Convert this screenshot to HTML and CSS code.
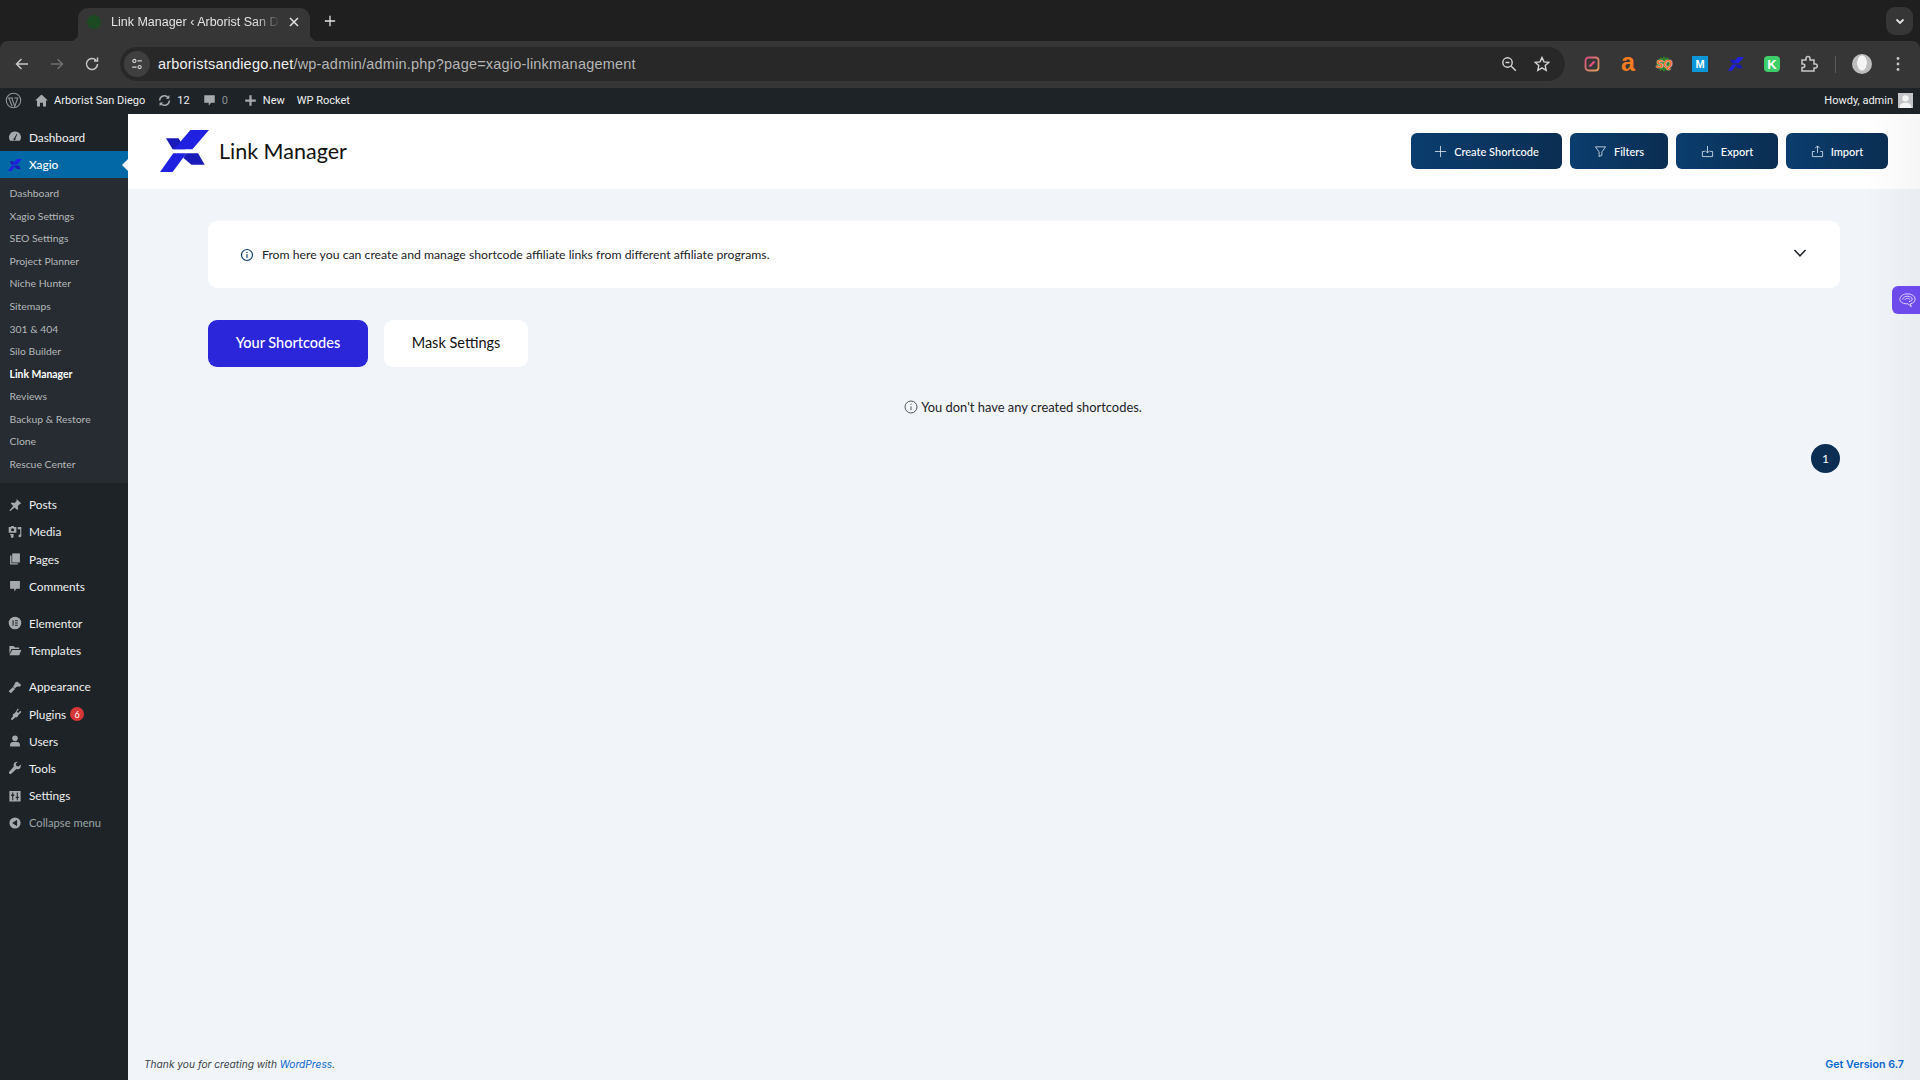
FILE: index.html
```html
<!DOCTYPE html>
<html lang="en">

<head>
    <meta charset="UTF-8">
    <title>Link Manager</title>
    <link rel="stylesheet" href="styles.css">
</head>

<body>

    <section class="chrome">
        <div class="tabstrip">
            <div class="tab">
                <span class="favicon"></span>
                <span class="tab_title">Link Manager ‹ Arborist San D</span>
                <svg class="tab_x" viewBox="0 0 12 12"><path d="M2 2l8 8M10 2l-8 8" /></svg>
            </div>
            <svg class="tab_new" viewBox="0 0 14 14"><path d="M7 1v12M1 7h12" /></svg>
            <div class="tab_menu">
                <svg viewBox="0 0 12 12"><path d="M2.5 4.500L6 8l3.500-3.500" /></svg>
            </div>
        </div>
        <div class="toolbar">
            <svg class="tool_btn" viewBox="0 0 16 16"><path d="M14 8H2.500M7.500 3L2.500 8l5 5" /></svg>
            <svg class="tool_btn dim" viewBox="0 0 16 16"><path d="M2 8h11.500M8.500 3l5 5-5 5" /></svg>
            <svg class="tool_btn" viewBox="0 0 16 16"><path d="M13.500 8a5.500 5.500 0 1 1-1.600-3.900M13.500 1.500v3.500H10" /></svg>
            <div class="omnibox">
                <span class="site_icon">
                    <svg viewBox="0 0 16 16"><circle cx="5" cy="4.500" r="1.800" /><path d="M8.500 4.500h5M2.500 11.500h5" /><circle cx="11" cy="11.500" r="1.800" /></svg>
                </span>
                <span class="url"><b>arboristsandiego.net</b>/wp-admin/admin.php?page=xagio-linkmanagement</span>
                <svg class="omni_icon" viewBox="0 0 16 16"><circle cx="6.500" cy="6.500" r="4.700" /><path d="M10 10l4.800 4.800M4.500 6.500h4" /></svg>
                <svg class="omni_icon" viewBox="0 0 16 16"><path d="M8 1.500l2 4.400 4.700.5-3.500 3.200 1 4.700L8 11.900l-4.200 2.400 1-4.700-3.500-3.200 4.700-.5z" /></svg>
            </div>
            <div class="extensions">
                <span class="ext ext_pen">
                    <svg viewBox="0 0 16 16">
                        <defs>
                            <linearGradient id="pen" x1="0" y1="0" x2="1" y2="1">
                                <stop offset="0" stop-color="#d9507f" />
                                <stop offset="1" stop-color="#d9a25a" />
                            </linearGradient>
                        </defs>
                        <rect x="1.500" y="1.500" width="13" height="13" rx="3" stroke="url(#pen)" />
                        <path d="M5.500 10.500l5-5" stroke="#e0517f" stroke-width="2.400" />
                    </svg>
                </span>
                <span class="ext ext_a">a</span>
                <span class="ext ext_sq">
                    <svg viewBox="0 0 16 16"><path d="M8 0l1.600 2.200L12 1l.6 2.600 2.600.4-.8 2.500L16 8l-1.600 1.500.8 2.500-2.600.4L12 15l-2.400-1.200L8 16l-1.600-2.200L4 15l-.6-2.600-2.600-.4.8-2.500L0 8l1.600-1.500L.8 4l2.600-.4L4 1l2.400 1.200z" /></svg>
                    <b>SQ</b>
                </span>
                <span class="ext ext_m">M</span>
                <span class="ext ext_x"><svg viewBox="0 0 148 127"><use href="#xagio" /></svg></span>
                <span class="ext ext_k">K</span>
                <svg class="ext_puzzle" viewBox="0 0 18 18"><path d="M2 5h4V3.500a2 2 0 0 1 4 0V5h4v4h1.200a2 2 0 0 1 0 4H14v3H2v-3.500h1a1.800 1.800 0 0 0 0-3.600H2z" /></svg>
                <span class="tool_sep"></span>
                <span class="avatar"></span>
                <svg class="kebab" viewBox="0 0 4 16"><circle cx="2" cy="2.500" r="1.400" /><circle cx="2" cy="8" r="1.400" /><circle cx="2" cy="13.500" r="1.400" /></svg>
            </div>
        </div>
    </section>

    <nav class="adminbar">
        <div class="bar_left">
            <svg class="bar_wp" viewBox="0 0 20 20"><circle cx="10" cy="10" r="8.500" /><path d="M4.500 7l4 10M8 7l3.500 10L15 7M3.500 7h6M11 7h4.500" /></svg>
            <span class="bar_item">
                <svg viewBox="0 0 20 20"><path d="M10 2L1.500 10H4v8h4v-5h4v5h4v-8h2.500z" /></svg>
                Arborist San Diego
            </span>
            <span class="bar_item">
                <svg class="stroke" viewBox="0 0 20 20"><path d="M3.500 10a6.500 6.500 0 0 1 11.500-4M16.500 10a6.500 6.500 0 0 1-11.500 4" /><path class="fill" d="M16.500 2.500v5h-5zM3.500 17.500v-5h5z" /></svg>
                12
            </span>
            <span class="bar_item muted">
                <svg viewBox="0 0 20 20"><path d="M3 3h14v10h-5l-3 4v-4H3z" /></svg>
                0
            </span>
            <span class="bar_item">
                <svg viewBox="0 0 20 20"><path d="M8.500 3h3v5.500H17v3h-5.500V17h-3v-5.500H3v-3h5.500z" /></svg>
                New
            </span>
            <span class="bar_item">WP Rocket</span>
        </div>
        <div class="bar_right">
            Howdy, admin
            <span class="bar_user">
                <svg viewBox="0 0 14 14"><circle cx="7" cy="5" r="3" /><path d="M1.500 14c0-4 2.500-5 5.500-5s5.500 1 5.500 5z" /></svg>
            </span>
        </div>
    </nav>

    <div class="wrap">
        <aside class="sidebar">
            <ul class="menu first">
                <li>
                    <svg viewBox="0 0 20 20"><path fill-rule="evenodd" d="M10 2a8.500 8.500 0 0 0-7 13.300h14A8.500 8.500 0 0 0 10 2zm-1 9.500l3.500-6 .8.400-2.700 6.200A1.500 1.500 0 1 1 9 11.500z" /></svg>
                    Dashboard
                </li>
                <li class="current">
                    <svg class="keep" viewBox="0 0 148 127"><use href="#xagio" /></svg>
                    Xagio
                </li>
            </ul>
            <ul class="submenu">
                <li>Dashboard</li>
                <li>Xagio Settings</li>
                <li>SEO Settings</li>
                <li>Project Planner</li>
                <li>Niche Hunter</li>
                <li>Sitemaps</li>
                <li>301 &amp; 404</li>
                <li>Silo Builder</li>
                <li class="valgt">Link Manager</li>
                <li>Reviews</li>
                <li>Backup &amp; Restore</li>
                <li>Clone</li>
                <li>Rescue Center</li>
            </ul>
            <ul class="menu posts">
                <li><svg viewBox="0 0 20 20"><path d="M12 1l7 7-2 .5-3 3 .5 4-1.500 1.500-3.500-3.500L3 19l-1-1 5.500-6.500L4 8l1.500-1.500 4 .5 3-3z" /></svg>Posts</li>
                <li><svg viewBox="0 0 20 20"><path fill-rule="evenodd" d="M1 3h3l1-1.500h3L9 3h3v8H1zm5.500 1.500a2.300 2.300 0 1 0 0 4.600 2.300 2.300 0 0 0 0-4.600z" /><path d="M14 3h5v12.500a2 2 0 1 1-1.500-1.900V6H14zM3 13h5v3.500a2 2 0 1 1-1.500-1.900V14.500H3z" /></svg>Media</li>
                <li><svg viewBox="0 0 20 20"><path d="M6 2h11v13H6z" /><path d="M3 5h2v11h9v2H3z" /></svg>Pages</li>
                <li><svg viewBox="0 0 20 20"><path d="M3 3h14v11h-5l-3 4v-4H3z" /></svg>Comments</li>
            </ul>
            <ul class="menu">
                <li><svg viewBox="0 0 20 20"><path fill-rule="evenodd" d="M10 1a9 9 0 1 0 0 18 9 9 0 0 0 0-18zM6.500 6H8v8H6.500zm3.500 0h4v1.500h-4zm0 3.200h4v1.500h-4zm0 3.300h4V14h-4z" /></svg>Elementor</li>
                <li><svg viewBox="0 0 20 20"><path d="M2 3h6l2 2h6v2H5L2 14z" /><path d="M6 8.500h13L16 16H2z" /></svg>Templates</li>
            </ul>
            <ul class="menu">
                <li><svg viewBox="0 0 20 20"><path d="M13 2l6 5-3 3-1-1-3 1-2 2-3-3 2-2 1-3zM7 10l3 3-6 6-3-3z" /></svg>Appearance</li>
                <li><svg viewBox="0 0 20 20"><path d="M14 2l1.500 1.500-3 3 2 2 3-3L19 7l-4 4.500-1 2-2 1.500-1.500-.5L6 19l-2-2 3.500-4-1-1.500L8 9.500l2-1z" /></svg>Plugins<span class="badge">6</span></li>
                <li><svg viewBox="0 0 20 20"><circle cx="10" cy="6" r="4" /><path d="M3 18v-3c0-3 3-4 7-4s7 1 7 4v3z" /></svg>Users</li>
                <li><svg viewBox="0 0 20 20"><path d="M18 5l-3 3-3-1-1-3 3-3C11 .5 8 2.500 8 6c0 .8.200 1.500.4 2L2 15c-1 1-1 2 0 3s2 1 3 0l7-6.500c4 1.500 7.500-2 6-6.500z" /></svg>Tools</li>
                <li><svg viewBox="0 0 20 20"><path fill-rule="evenodd" d="M2 3h16v15H2zM6 5v3H4.500v2H6v6h1.500v-6H9V8H7.500V5zM12.500 5v6H11v2h1.500v3H14v-3h1.500v-2H14V5z" /></svg>Settings</li>
                <li class="collapse"><svg viewBox="0 0 20 20"><path fill-rule="evenodd" d="M10 2a8 8 0 1 0 0 16 8 8 0 0 0 0-16zm3 3.500v9L6 10z" /></svg>Collapse menu</li>
            </ul>
        </aside>

        <main class="content">
            <header class="plugin_head">
                <div class="brand">
                    <svg class="logo" viewBox="0 0 148 127"><use href="#xagio" /></svg>
                    <h1>Link Manager</h1>
                </div>
                <div class="actions">
                    <button class="action wide"><svg viewBox="0 0 14 14"><path d="M7 1v12M1 7h12" /></svg>Create Shortcode</button>
                    <button class="action filters"><svg viewBox="0 0 14 14"><path d="M1.500 2h11L8.500 7.500V11L5.500 12.500v-5z" /></svg>Filters</button>
                    <button class="action"><svg viewBox="0 0 14 14"><path d="M7 1v7.500M4.500 6L7 8.500 9.500 6M4 7H1.500v5.500h11V7H10" /></svg>Export</button>
                    <button class="action"><svg viewBox="0 0 14 14"><path d="M7 8.500V1M4.500 3.500L7 1l2.500 2.500M4 7H1.500v5.500h11V7H10" /></svg>Import</button>
                </div>
            </header>

            <div class="page">
                <section class="info_box">
                    <p>
                        <svg viewBox="0 0 14 14"><circle cx="7" cy="7" r="5.500" /><path d="M7 6.300v3.500M7 4v1" /></svg>
                        From here you can create and manage shortcode affiliate links from different affiliate programs.
                    </p>
                    <svg class="chevron" viewBox="0 0 14 14"><path d="M1.500 4L7 9.800 12.500 4" /></svg>
                </section>

                <div class="tabs">
                    <button class="pill active">Your Shortcodes</button>
                    <button class="pill">Mask Settings</button>
                </div>

                <p class="empty">
                    <svg viewBox="0 0 14 14"><circle cx="7" cy="7" r="6" /><path d="M7 6.300v3.800M7 3.800v1" /></svg>
                    You don't have any created shortcodes.
                </p>

                <div class="pager"><span class="page_no">1</span></div>
            </div>

            <footer class="foot">
                <em>Thank you for creating with <a>WordPress</a>.</em>
                <a class="version">Get Version 6.7</a>
            </footer>
        </main>
    </div>

    <div class="edge_shade"></div>

    <button class="ai_tab">
        <svg viewBox="0 0 20 20">
            <path d="M2 9c0-3.500 3.500-6 8-6s8 2.500 8 5.500c0 2.500-2 4.500-5 5l1 3-3.500-3c-4.500.2-8.500-1.500-8.500-4.500z" />
            <path d="M5 9c0-2 2.200-3.500 5-3.500S15 7 15 8.500 13.500 11 11.500 11.200" />
            <path d="M7.500 9.500c0-1 1-1.700 2.500-1.700s2.500.7 2.500 1.500" />
        </svg>
    </button>

    <svg class="defs" width="0" height="0">
        <defs>
            <g id="xagio">
                <path fill="#1a1ab8" d="M18 25H56L76 58H38z" />
                <path fill="#2020e0" d="M92 0H148L98 58H42z" />
                <path fill="#2020e0" d="M40 70H80L38 127H0z" />
                <path fill="#1a1ab8" d="M80 70H115L135 105H95L70 84z" />
            </g>
        </defs>
    </svg>

</body>

</html>
```

FILE: styles.css
```css
* {
    box-sizing: border-box;
}

html,
body {
    margin: 0;
    height: 100%;
}

body {
    width: 1920px;
    height: 1080px;
    overflow: hidden;
    display: flex;
    flex-direction: column;
    font-family: Lato, "Noto Sans", sans-serif;
    background-color: #f1f5f9;
}

ul {
    list-style: none;
    margin: 0;
    padding: 0;
}

button {
    border: none;
    font-family: inherit;
    cursor: pointer;
}

.defs {
    position: absolute;
}

/* browser */

.chrome {
    height: 88px;
    flex: none;
    background-color: #1f1f1f;
    font-family: "Liberation Sans", sans-serif;
}

.tabstrip {
    height: 41px;
    display: flex;
    align-items: flex-end;
    padding-left: 78px;
}

.tab {
    position: relative;
    width: 232px;
    height: 33px;
    flex: none;
    background-color: #363636;
    border-radius: 10px 10px 0 0;
    display: flex;
    align-items: center;
    padding: 0 10px 6px 9px;
    color: #e3e3e3;
    font-size: 12.5px;
}

.tab::before,
.tab::after {
    content: "";
    position: absolute;
    bottom: 0;
    width: 8px;
    height: 8px;
}

.tab::before {
    left: -8px;
    background: radial-gradient(circle at 0 0, transparent 8px, #363636 8.5px);
}

.tab::after {
    right: -8px;
    background: radial-gradient(circle at 100% 0, transparent 8px, #363636 8.5px);
}

.favicon {
    width: 14px;
    height: 14px;
    border-radius: 50%;
    background-color: #1c4a22;
    flex: none;
}

.tab_title {
    flex: 1;
    margin: 0 8px 0 10px;
    white-space: nowrap;
    -webkit-mask-image: linear-gradient(90deg, #000 85%, transparent);
    mask-image: linear-gradient(90deg, #000 85%, transparent);
}

.tab_x {
    width: 12px;
    height: 12px;
    flex: none;
    stroke: #e3e3e3;
    stroke-width: 1.5;
    fill: none;
}

.tab_new {
    width: 12px;
    height: 12px;
    margin: 0 0 14px 14px;
    stroke: #e3e3e3;
    stroke-width: 1.5;
    fill: none;
}

.tab_menu {
    margin: 0 7px 6px auto;
    width: 27px;
    height: 28px;
    background-color: #363636;
    border-radius: 9px;
    display: flex;
    align-items: center;
    justify-content: center;
}

.tab_menu svg {
    width: 12px;
    height: 12px;
    stroke: #e3e3e3;
    stroke-width: 1.8;
    fill: none;
}

.toolbar {
    height: 47px;
    background-color: #363636;
    display: flex;
    align-items: center;
    padding: 0 0 1px 14px;
    border-radius: 8px 8px 0 0;
}

.tool_btn {
    width: 16px;
    height: 16px;
    margin-right: 19px;
    flex: none;
    stroke: #c7c7c7;
    stroke-width: 1.5;
    fill: none;
}

.tool_btn.dim {
    stroke: #6e6e6e;
}

.omnibox {
    width: 1445px;
    height: 34px;
    margin-left: 1px;
    border-radius: 17px;
    background-color: #282828;
    display: flex;
    align-items: center;
    padding: 0 15px 0 4px;
    flex: none;
}

.site_icon {
    width: 26px;
    height: 26px;
    border-radius: 50%;
    background-color: #3f3f3f;
    display: flex;
    align-items: center;
    justify-content: center;
}

.site_icon svg {
    width: 14px;
    height: 14px;
    fill: none;
    stroke: #d5d5d5;
    stroke-width: 1.3;
}

.url {
    margin-left: 8px;
    color: #b6b6b6;
    font-size: 14.5px;
    letter-spacing: .2px;
    flex: 1;
}

.url b {
    color: #f0f0f0;
    font-weight: normal;
}

.omni_icon {
    width: 16px;
    height: 16px;
    margin-left: 17px;
    fill: none;
    stroke: #d5d5d5;
    stroke-width: 1.4;
}

.extensions {
    display: flex;
    align-items: center;
    margin-left: 19px;
}

.ext {
    position: relative;
    width: 16px;
    height: 16px;
    margin-right: 20px;
    display: flex;
    align-items: center;
    justify-content: center;
    flex: none;
    font-weight: bold;
}

.ext_pen svg {
    fill: none;
    stroke-width: 1.8;
}

.ext_a {
    color: #f47b20;
    font-size: 25px;
    line-height: 16px;
    padding-bottom: 4px;
}

.ext_sq svg {
    position: absolute;
    inset: 0;
    fill: #2f7d2a;
}

.ext_sq b {
    position: relative;
    color: #f26522;
    font-size: 11px;
    font-style: italic;
    text-shadow: 0 0 1px #fff, 0 0 1px #fff;
}

.ext_m {
    background-color: #0a96d8;
    color: #fff;
    font-size: 11px;
}

.ext_k {
    background-color: #3fcf6a;
    border-radius: 4px;
    color: #fff;
    font-size: 13px;
}

.ext_puzzle {
    width: 18px;
    height: 18px;
    fill: none;
    stroke: #c7c7c7;
    stroke-width: 1.5;
    flex: none;
}

.tool_sep {
    width: 1px;
    height: 17px;
    margin: 0 16px 0 17px;
    background-color: #5a5a5a;
}

.avatar {
    width: 20px;
    height: 20px;
    border-radius: 50%;
    background: radial-gradient(ellipse 5px 8px at 50% 45%, #f4f4f4 90%, #bdbdbd);
    flex: none;
}

.kebab {
    width: 4px;
    height: 16px;
    margin-left: 24px;
    fill: #c7c7c7;
    flex: none;
}

/* admin bar */

.adminbar {
    height: 26px;
    flex: none;
    background-color: #1d2327;
    color: #f0f0f1;
    font-size: 11px;
    display: flex;
    justify-content: space-between;
    align-items: center;
    padding: 0 7px 1px 5px;
    font-family: Roboto, "Liberation Sans", sans-serif;
}

.bar_left,
.bar_right,
.bar_item {
    display: flex;
    align-items: center;
}

.bar_wp {
    width: 17px;
    height: 17px;
    stroke: #8f9499;
    stroke-width: 1.3;
    fill: none;
    margin-right: 12px;
}

.bar_item {
    margin-right: 12px;
    gap: 5px;
}

.bar_item svg {
    width: 15px;
    height: 15px;
    fill: #a7aaad;
}

.bar_item svg.stroke {
    fill: none;
    stroke: #a7aaad;
    stroke-width: 2;
}

.bar_item svg .fill {
    fill: #a7aaad;
    stroke: none;
}

.bar_item.muted {
    margin-right: 15px;
    color: #8a8f94;
}

.bar_user {
    width: 15px;
    height: 15px;
    margin-left: 5px;
    background-color: #c3c4c7;
    display: flex;
    align-items: flex-end;
}

.bar_user svg {
    width: 15px;
    height: 15px;
    fill: #f4f4f4;
}

/* sidebar */

.wrap {
    flex: 1;
    display: flex;
    min-height: 0;
}

.sidebar {
    width: 128px;
    flex: none;
    background-color: #1d2327;
    color: #f0f0f1;
    font-size: 11.8px;
    padding-top: 9px;
}

.menu li {
    height: 27.2px;
    display: flex;
    align-items: center;
    padding-left: 8px;
    gap: 7px;
}

.menu li svg {
    width: 14px;
    height: 14px;
    flex: none;
    fill: #a7aaad;
}

.menu.posts {
    margin-top: 8px;
    margin-bottom: 10px;
}

.menu + .menu {
    margin-bottom: 9px;
}

.menu.first li:first-child {
    height: 28px;
}

.menu .current {
    position: relative;
    height: 27px;
    background-color: #0369a6;
    color: #fff;
    font-weight: 500;
}

.menu .current::after {
    content: "";
    position: absolute;
    right: 0;
    top: 8px;
    border: 6px solid transparent;
    border-right-color: #f1f5f9;
    border-left: none;
}

.submenu {
    background-color: #262c31;
    padding: 4px 0 8px;
    color: #b5b8bb;
    font-size: 10.4px;
}

.submenu li {
    height: 22.55px;
    display: flex;
    align-items: center;
    padding-left: 9.5px;
}

.submenu .valgt {
    color: #fff;
    font-weight: 700;
}

.badge {
    width: 14px;
    height: 14px;
    border-radius: 50%;
    background-color: #d63638;
    color: #fff;
    font-size: 9px;
    display: flex;
    align-items: center;
    justify-content: center;
    margin-left: -3px;
}

.menu .collapse {
    color: #9ea3a8;
    font-size: 11.2px;
}

/* content */

.content {
    flex: 1;
    min-width: 0;
    display: flex;
    flex-direction: column;
}

.plugin_head {
    height: 75px;
    flex: none;
    background-color: #fff;
    display: flex;
    align-items: center;
    justify-content: space-between;
    padding: 0 32px 1px 32px;
}

.brand {
    display: flex;
    align-items: center;
    gap: 10px;
}

.logo {
    width: 49px;
    height: 42px;
}

.brand h1 {
    margin: 0;
    font-size: 21.5px;
    font-weight: 400;
    color: #111;
}

.actions {
    display: flex;
    gap: 8px;
}

.action {
    height: 36px;
    width: 102px;
    border-radius: 6px;
    background: linear-gradient(90deg, #0a3d6e, #0b2e52);
    color: #fff;
    font-size: 11px;
    font-weight: 500;
    display: flex;
    align-items: center;
    justify-content: center;
    gap: 7px;
}

.action.wide {
    width: 151px;
}

.action.filters {
    width: 98px;
}

.action svg {
    width: 13px;
    height: 13px;
    fill: none;
    stroke: #d9e2ea;
    stroke-width: .9;
}

.page {
    flex: 1;
    padding: 32px 80px 0 80px;
}

.info_box {
    height: 67px;
    background-color: #fff;
    border-radius: 9px;
    display: flex;
    align-items: center;
    justify-content: space-between;
    padding: 0 32px;
}

.info_box p {
    margin: 0;
    font-size: 12.25px;
    color: #1d2327;
    display: flex;
    align-items: center;
    gap: 8px;
}

.info_box p svg {
    width: 14px;
    height: 14px;
    fill: none;
    stroke: #0a3d6e;
    stroke-width: 1.2;
}

.chevron {
    width: 14px;
    height: 14px;
    margin: -3px 1px 0 0;
    fill: none;
    stroke: #1d2327;
    stroke-width: 1.5;
}

.tabs {
    display: flex;
    gap: 16px;
    margin-top: 32px;
}

.pill {
    height: 47px;
    width: 144px;
    padding-bottom: 3px;
    border-radius: 9px;
    background-color: #fff;
    color: #111;
    font-size: 14.5px;
}

.pill.active {
    width: 160px;
    background-color: #2b26d9;
    color: #fff;
    font-weight: 500;
}

.empty {
    margin: 31px 0 0 -2px;
    display: flex;
    align-items: center;
    justify-content: center;
    gap: 3px;
    font-size: 12.9px;
    line-height: 18px;
    color: #1d2327;
}

.empty svg {
    width: 14px;
    height: 14px;
    fill: none;
    stroke: #444;
    stroke-width: .9;
}

.pager {
    display: flex;
    justify-content: flex-end;
    margin-top: 28px;
}

.page_no {
    width: 29px;
    height: 29px;
    border-radius: 50%;
    background-color: #0b2e52;
    color: #fff;
    font-size: 12px;
    display: flex;
    align-items: center;
    justify-content: center;
}

.foot {
    height: 36px;
    flex: none;
    display: flex;
    justify-content: space-between;
    align-items: flex-start;
    padding: 14px 16px 0;
    font-size: 10.2px;
    color: #3c434a;
    font-family: Inter, "Liberation Sans", sans-serif;
}

.foot a {
    color: #0a68d0;
}

.foot .version {
    font-size: 10.7px;
    font-weight: 600;
}

/* faint shade down the right edge of the page */
.edge_shade {
    position: absolute;
    top: 114px;
    right: 0;
    bottom: 0;
    width: 55px;
    background: linear-gradient(90deg, transparent, rgba(0, 0, 0, .035));
    pointer-events: none;
}

.ai_tab {
    position: absolute;
    right: 0;
    top: 286px;
    width: 28px;
    height: 28px;
    padding: 0 0 0 2px;
    border-radius: 6px 0 0 6px;
    background-color: #6d4aec;
    display: flex;
    align-items: center;
    justify-content: center;
}

.ai_tab svg {
    width: 19px;
    height: 19px;
    fill: none;
    stroke: #e6dcff;
    stroke-width: 1;
}
```
